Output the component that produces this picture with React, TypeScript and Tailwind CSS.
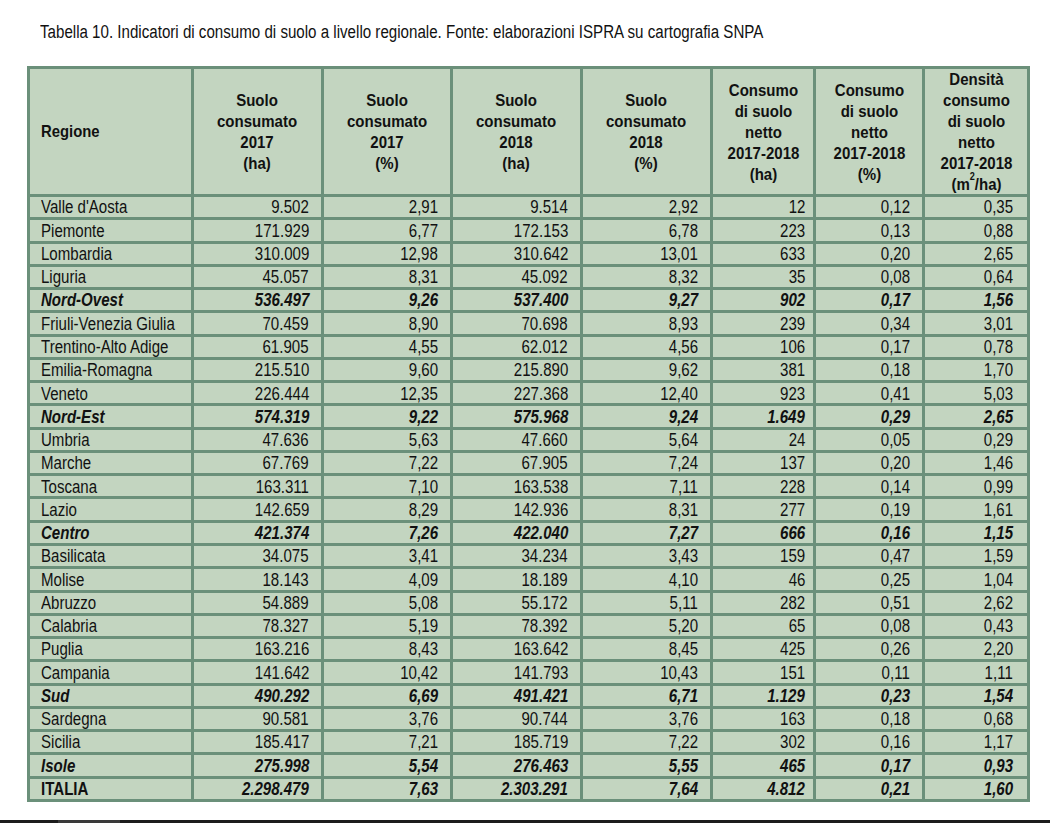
import React from "react";

type Row = { name: string; vals: string[]; kind: "n" | "g" | "t" };

const rows: Row[] = [
  { name: "Valle d'Aosta", vals: ["9.502", "2,91", "9.514", "2,92", "12", "0,12", "0,35"], kind: "n" },
  { name: "Piemonte", vals: ["171.929", "6,77", "172.153", "6,78", "223", "0,13", "0,88"], kind: "n" },
  { name: "Lombardia", vals: ["310.009", "12,98", "310.642", "13,01", "633", "0,20", "2,65"], kind: "n" },
  { name: "Liguria", vals: ["45.057", "8,31", "45.092", "8,32", "35", "0,08", "0,64"], kind: "n" },
  { name: "Nord-Ovest", vals: ["536.497", "9,26", "537.400", "9,27", "902", "0,17", "1,56"], kind: "g" },
  { name: "Friuli-Venezia Giulia", vals: ["70.459", "8,90", "70.698", "8,93", "239", "0,34", "3,01"], kind: "n" },
  { name: "Trentino-Alto Adige", vals: ["61.905", "4,55", "62.012", "4,56", "106", "0,17", "0,78"], kind: "n" },
  { name: "Emilia-Romagna", vals: ["215.510", "9,60", "215.890", "9,62", "381", "0,18", "1,70"], kind: "n" },
  { name: "Veneto", vals: ["226.444", "12,35", "227.368", "12,40", "923", "0,41", "5,03"], kind: "n" },
  { name: "Nord-Est", vals: ["574.319", "9,22", "575.968", "9,24", "1.649", "0,29", "2,65"], kind: "g" },
  { name: "Umbria", vals: ["47.636", "5,63", "47.660", "5,64", "24", "0,05", "0,29"], kind: "n" },
  { name: "Marche", vals: ["67.769", "7,22", "67.905", "7,24", "137", "0,20", "1,46"], kind: "n" },
  { name: "Toscana", vals: ["163.311", "7,10", "163.538", "7,11", "228", "0,14", "0,99"], kind: "n" },
  { name: "Lazio", vals: ["142.659", "8,29", "142.936", "8,31", "277", "0,19", "1,61"], kind: "n" },
  { name: "Centro", vals: ["421.374", "7,26", "422.040", "7,27", "666", "0,16", "1,15"], kind: "g" },
  { name: "Basilicata", vals: ["34.075", "3,41", "34.234", "3,43", "159", "0,47", "1,59"], kind: "n" },
  { name: "Molise", vals: ["18.143", "4,09", "18.189", "4,10", "46", "0,25", "1,04"], kind: "n" },
  { name: "Abruzzo", vals: ["54.889", "5,08", "55.172", "5,11", "282", "0,51", "2,62"], kind: "n" },
  { name: "Calabria", vals: ["78.327", "5,19", "78.392", "5,20", "65", "0,08", "0,43"], kind: "n" },
  { name: "Puglia", vals: ["163.216", "8,43", "163.642", "8,45", "425", "0,26", "2,20"], kind: "n" },
  { name: "Campania", vals: ["141.642", "10,42", "141.793", "10,43", "151", "0,11", "1,11"], kind: "n" },
  { name: "Sud", vals: ["490.292", "6,69", "491.421", "6,71", "1.129", "0,23", "1,54"], kind: "g" },
  { name: "Sardegna", vals: ["90.581", "3,76", "90.744", "3,76", "163", "0,18", "0,68"], kind: "n" },
  { name: "Sicilia", vals: ["185.417", "7,21", "185.719", "7,22", "302", "0,16", "1,17"], kind: "n" },
  { name: "Isole", vals: ["275.998", "5,54", "276.463", "5,55", "465", "0,17", "0,93"], kind: "g" },
  { name: "ITALIA", vals: ["2.298.479", "7,63", "2.303.291", "7,64", "4.812", "0,21", "1,60"], kind: "t" },
];

const padR = ["pr-[12px]", "pr-[12px]", "pr-[12px]", "pr-[12px]", "pr-[8px]", "pr-[12px]", "pr-[14px]"];

const headers: React.ReactNode[] = [
  <>Suolo<br />consumato<br />2017<br />(ha)</>,
  <>Suolo<br />consumato<br />2017<br />(%)</>,
  <>Suolo<br />consumato<br />2018<br />(ha)</>,
  <>Suolo<br />consumato<br />2018<br />(%)</>,
  <>Consumo<br />di suolo<br />netto<br />2017-2018<br />(ha)</>,
  <>Consumo<br />di suolo<br />netto<br />2017-2018<br />(%)</>,
  <>Densità<br />consumo<br />di suolo<br />netto<br />2017-2018<br />(m<sup className="text-[10px] align-[5px]">2</sup>/ha)</>,
];

export default function App() {
  return (
    <div
      className="relative w-[1050px] h-[823px] bg-white text-[#111] overflow-hidden"
      style={{ fontFamily: '"Liberation Sans", Arial, sans-serif' }}
    >
      <div className="pt-[21px] pl-[40px] h-[66px]">
        <div className="inline-block origin-left scale-x-[0.84] whitespace-nowrap text-[18px] leading-[22px]">
          Tabella 10. Indicatori di consumo di suolo a livello regionale. Fonte: elaborazioni ISPRA su cartografia SNPA
        </div>
      </div>
      <div className="ml-[27px] w-[1003px] p-[3px] bg-[#6b907a]">
        <div className="grid grid-cols-[161px_127px_126px_127px_127px_100px_106px_102px] grid-rows-[125px_repeat(26,20.27px)] gap-[3px] text-[17.5px]">
          <div className="bg-[#c3d5c0] flex items-center pl-[11px] font-bold">
            <span className="inline-block origin-left scale-x-[0.9] text-[16.5px]">Regione</span>
          </div>
          {headers.map((h, i) => (
            <div key={i} className="bg-[#c3d5c0] flex items-center justify-center text-center font-bold leading-[21px] pt-[1px]">
              <div className="origin-center scale-x-[0.91] text-[16.5px] whitespace-nowrap">{h}</div>
            </div>
          ))}
          {rows.map((r) => (
            <React.Fragment key={r.name}>
              <div
                className={
                  "bg-[#c3d5c0] flex items-center pl-[11px] pt-[2px] leading-none " +
                  (r.kind === "g" ? "font-bold italic" : r.kind === "t" ? "font-bold" : "")
                }
              >
                <span className="inline-block origin-left scale-x-[0.86] whitespace-nowrap">{r.name}</span>
              </div>
              {r.vals.map((v, j) => (
                <div
                  key={j}
                  className={
                    "bg-[#c3d5c0] flex items-center justify-end pt-[2px] leading-none " +
                    padR[j] +
                    (r.kind !== "n" ? " font-bold italic" : "")
                  }
                >
                  <span className="inline-block origin-right scale-x-[0.86] whitespace-nowrap">{v}</span>
                </div>
              ))}
            </React.Fragment>
          ))}
        </div>
      </div>
      <div className="absolute left-0 right-0 bottom-0 h-[3px] bg-[#1c1c1c]">
        <div className="ml-[58px] w-[62px] h-full bg-[#3a3a3a]" />
      </div>
    </div>
  );
}
